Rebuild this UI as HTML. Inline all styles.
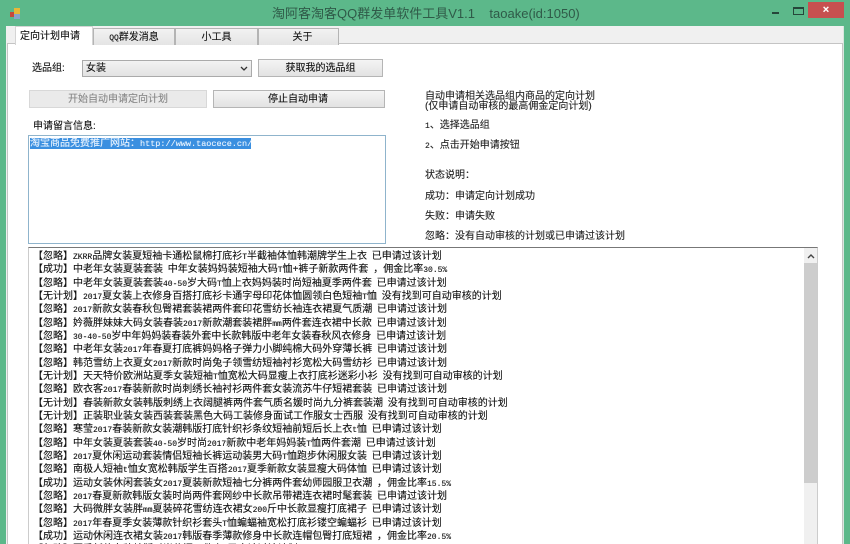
<!DOCTYPE html>
<html style="overflow:hidden;height:544px"><head><meta charset="utf-8"><style>
html,body{margin:0;padding:0}
body{width:850px;height:544px;overflow:hidden;position:relative;background:#5cb88a}
#w{position:absolute;left:0;top:0;width:850px;height:544px;overflow:hidden;background:#5cb88a;filter:blur(.3px);font-family:"Liberation Sans","Noto Sans CJK SC",sans-serif;font-size:10px;color:#111;-webkit-text-stroke:.12px currentColor}
#w div{position:absolute;box-sizing:border-box;white-space:nowrap}
i{font-style:normal;font-size:8px;font-family:"Liberation Mono",monospace}
.btn{background:linear-gradient(#f4f4f4,#e2e2e2);border:1px solid #b5b5b5;text-align:center;color:#111}
.tab{top:28px;height:17px;background:linear-gradient(#f2f2f2,#e4e4e4);border:1px solid #b4b4b4;border-bottom:none;text-align:center;line-height:17px}
#w .t{left:425px;height:14px;line-height:14px;color:#222;margin-top:2px}
#w .l{left:33px;height:14px;line-height:14px;color:#111;word-spacing:2px;margin-top:1px}
</style></head><body><div id="w">
<div style="left:6px;top:26px;width:838px;height:518px;background:#f0f0f0"></div>
<div style="left:7px;top:43px;width:836px;height:501px;background:#fff;border:1px solid #c4c4c4;border-bottom:none"></div>
<svg style="position:absolute;left:9px;top:7px" width="12" height="13" viewBox="0 0 12 13"><rect x="5" y="1" width="6" height="6" fill="#e8b838"/><rect x="1" y="5" width="4" height="5" fill="#c8483a"/><rect x="5" y="7" width="6" height="5" fill="#8aa4c8"/></svg>
<div style="left:272px;top:5px;height:18px;line-height:18px;font-size:13px;color:#2f5a48;white-space:pre;-webkit-text-stroke:0">淘阿客淘客QQ群发单软件工具V1.1    taoake(id:1050)</div>
<div style="left:772px;top:12px;width:7px;height:2px;background:#26463a"></div>
<div style="left:793px;top:7px;width:11px;height:8px;border:1px solid #26463a;border-top-width:2px"></div>
<div style="left:808px;top:2px;width:36px;height:16px;background:#c75050;color:#fff;text-align:center;line-height:16px;font-size:11px;font-weight:bold">×</div>
<div style="left:15px;top:26px;width:78px;height:19px;background:#fff;line-height:19px;padding-left:4px;color:#111;border:1px solid #d4d4d4;border-bottom:none">定向计划申请</div>
<div class="tab" style="left:93px;width:82px"><i>QQ</i>群发消息</div>
<div class="tab" style="left:175px;width:83px">小工具</div>
<div class="tab" style="left:258px;width:81px;padding-left:8px">关于</div>
<div style="left:32px;top:62px;height:14px;line-height:14px">选品组:</div>
<div style="left:82px;top:60px;width:170px;height:17px;background:linear-gradient(#f2f2f2,#e2e2e2);border:1px solid #aaa;line-height:15px;padding-left:3px">女装</div>
<svg style="position:absolute;left:240px;top:66px" width="8" height="6"><path d="M1 1 L4 4 L7 1" fill="none" stroke="#333" stroke-width="1.3"/></svg>
<div class="btn" style="left:258px;top:59px;width:125px;height:18px;line-height:18px">获取我的选品组</div>
<div class="btn" style="left:29px;top:90px;width:178px;height:18px;line-height:18px;background:#eaeaea;border-color:#d8d8d8;color:#888">开始自动申请定向计划</div>
<div class="btn" style="left:213px;top:90px;width:172px;height:18px;line-height:18px;padding-right:2px">停止自动申请</div>
<div style="left:33px;top:120px;height:14px;line-height:14px">申请留言信息:</div>
<div style="left:28px;top:135px;width:358px;height:109px;background:#fff;border:1px solid #8fb4cc"></div>
<div style="left:30px;top:138px;width:221px;height:11px;background:#3a8fe0;color:#eaf4ff;line-height:11px">淘宝商品免费推广网站：<span style="font-family:'Liberation Mono',monospace;font-size:8.5px">http://www.taocece.cn/</span></div>

<div class="t" style="top:88px">自动申请相关选品组内商品的定向计划</div>
<div class="t" style="top:98px">(仅申请自动审核的最高佣金定向计划)</div>
<div class="t" style="top:117px"><i>1</i>、选择选品组</div>
<div class="t" style="top:137px"><i>2</i>、点击开始申请按钮</div>
<div class="t" style="top:167px">状态说明：</div>
<div class="t" style="top:188px">成功：申请定向计划成功</div>
<div class="t" style="top:208px">失败：申请失败</div>
<div class="t" style="top:228px">忽略：没有自动审核的计划或已申请过该计划</div>

<div style="left:28px;top:247px;width:790px;height:297px;background:#fff;border-top:1px solid #777;border-left:1px solid #ccc;border-right:1px solid #ccc"></div>
<div style="left:804px;top:248px;width:13px;height:296px;background:#f0f0f0"></div>
<div style="left:804px;top:263px;width:13px;height:220px;background:#cdcdcd"></div>
<svg style="position:absolute;left:807px;top:253px" width="8" height="6"><path d="M1 5 L4 2 L7 5" fill="none" stroke="#444" stroke-width="1.4"/></svg>

<div class="l" style="top:249px">【忽略】<i>ZKRR</i>品牌女装夏短袖卡通松鼠棉打底衫<i>T</i>半截袖体恤韩潮牌学生上衣 已申请过该计划</div>
<div class="l" style="top:262px">【成功】中老年女装夏装套装 中年女装妈妈装短袖大码<i>T</i>恤+裤子新款两件套 ，佣金比率<i>30.5%</i></div>
<div class="l" style="top:276px">【忽略】中老年女装夏装套装<i>40-50</i>岁大码<i>T</i>恤上衣妈妈装时尚短袖夏季两件套 已申请过该计划</div>
<div class="l" style="top:289px">【无计划】<i>2017</i>夏女装上衣修身百搭打底衫卡通字母印花体恤圆领白色短袖<i>T</i>恤 没有找到可自动审核的计划</div>
<div class="l" style="top:302px">【忽略】<i>2017</i>新款女装春秋包臀裙套装裙两件套印花雪纺长袖连衣裙夏气质潮 已申请过该计划</div>
<div class="l" style="top:316px">【忽略】妗薇胖妹妹大码女装春装<i>2017</i>新款潮套装裙胖<i>mm</i>两件套连衣裙中长款 已申请过该计划</div>
<div class="l" style="top:329px">【忽略】<i>30-40-50</i>岁中年妈妈装春装外套中长款韩版中老年女装春秋风衣修身 已申请过该计划</div>
<div class="l" style="top:342px">【忽略】中老年女装<i>2017</i>年春夏打底裤妈妈格子弹力小脚纯棉大码外穿薄长裤 已申请过该计划</div>
<div class="l" style="top:356px">【忽略】韩范雪纺上衣夏女<i>2017</i>新款时尚兔子领雪纺短袖衬衫宽松大码雪纺衫 已申请过该计划</div>
<div class="l" style="top:369px">【无计划】天天特价欧洲站夏季女装短袖<i>T</i>恤宽松大码显瘦上衣打底衫迷彩小衫 没有找到可自动审核的计划</div>
<div class="l" style="top:382px">【忽略】欧衣客<i>2017</i>春装新款时尚刺绣长袖衬衫两件套女装流苏牛仔短裙套装 已申请过该计划</div>
<div class="l" style="top:396px">【无计划】春装新款女装韩版刺绣上衣阔腿裤两件套气质名媛时尚九分裤套装潮 没有找到可自动审核的计划</div>
<div class="l" style="top:409px">【无计划】正装职业装女装西装套装黑色大码工装修身面试工作服女士西服 没有找到可自动审核的计划</div>
<div class="l" style="top:422px">【忽略】寒莹<i>2017</i>春装新款女装潮韩版打底针织衫条纹短袖前短后长上衣<i>t</i>恤 已申请过该计划</div>
<div class="l" style="top:436px">【忽略】中年女装夏装套装<i>40-50</i>岁时尚<i>2017</i>新款中老年妈妈装<i>T</i>恤两件套潮 已申请过该计划</div>
<div class="l" style="top:449px">【忽略】<i>2017</i>夏休闲运动套装情侣短袖长裤运动装男大码<i>T</i>恤跑步休闲服女装 已申请过该计划</div>
<div class="l" style="top:462px">【忽略】南极人短袖<i>t</i>恤女宽松韩版学生百搭<i>2017</i>夏季新款女装显瘦大码体恤 已申请过该计划</div>
<div class="l" style="top:476px">【成功】运动女装休闲套装女<i>2017</i>夏装新款短袖七分裤两件套幼师园服卫衣潮 ，佣金比率<i>15.5%</i></div>
<div class="l" style="top:489px">【忽略】<i>2017</i>春夏新款韩版女装时尚两件套网纱中长款吊带裙连衣裙时髦套装 已申请过该计划</div>
<div class="l" style="top:502px">【忽略】大码微胖女装胖<i>mm</i>夏装碎花雪纺连衣裙女<i>200</i>斤中长款显瘦打底裙子 已申请过该计划</div>
<div class="l" style="top:516px">【忽略】<i>2017</i>年春夏季女装薄款针织衫套头<i>T</i>恤蝙蝠袖宽松打底衫镂空蝙蝠衫 已申请过该计划</div>
<div class="l" style="top:529px">【成功】运动休闲连衣裙女装<i>2017</i>韩版春季薄款修身中长款连帽包臀打底短裙 ，佣金比率<i>20.5%</i></div>
<div class="l" style="top:542px">【忽略】夏季新款女装韩版时尚休闲两件套 已申请过该计划</div>
<div style="left:843px;top:26px;width:1px;height:518px;background:#d8e6df"></div>
</div></body></html>
